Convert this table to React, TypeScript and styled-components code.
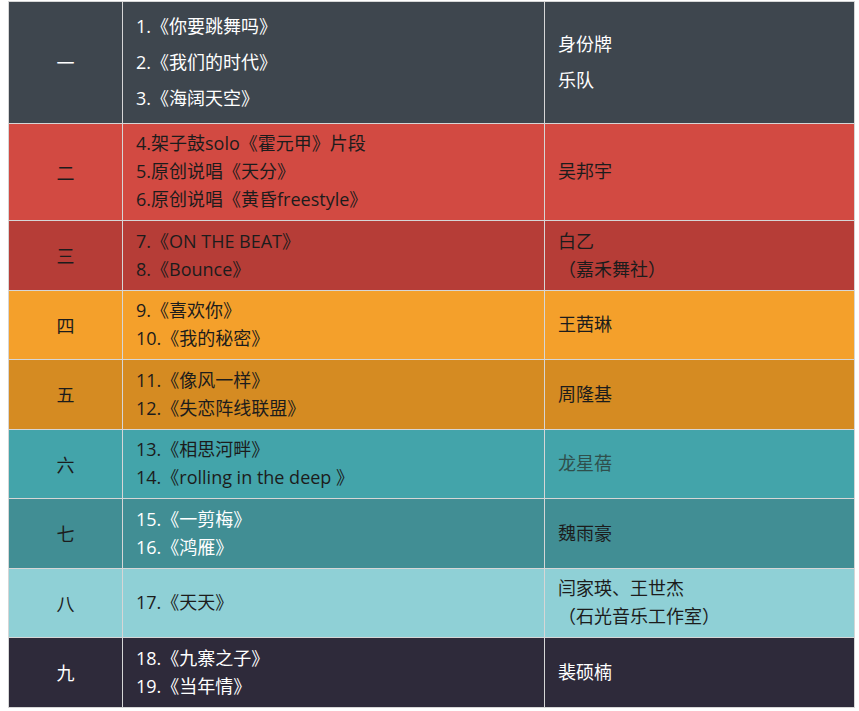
import React from "react";
import styled, { createGlobalStyle } from "styled-components";

const GlobalStyle = createGlobalStyle`
  html, body {
    margin: 0;
    padding: 0;
    background: #ffffff;
  }
  body {
    font-family: "Open Sans", "Noto Sans CJK SC", sans-serif;
  }
`;

const Page = styled.div`
  padding: 1px 0 0 8px;
`;

const Table = styled.table`
  width: 847px;
  border-collapse: collapse;
  table-layout: fixed;
  font-size: 18px;
`;

const Row = styled.tr<{ $bg: string }>`
  background: ${({ $bg }) => $bg};
`;

const Cell = styled.td<{ $color: string }>`
  border: 1px solid #d6d6d6;
  color: ${({ $color }) => $color};
  padding: 6.5px 13px 6px;
  vertical-align: middle;
`;

const IndexCell = styled(Cell)`
  text-align: center;
  padding: 0;
`;

const Line = styled.div<{ $tall?: boolean }>`
  height: ${({ $tall }) => ($tall ? "36px" : "28px")};
  line-height: ${({ $tall }) => ($tall ? "34px" : "26px")};
  white-space: nowrap;
  overflow: visible;
`;

type Item = {
  idx: string;
  bg: string;
  colors: [string, string, string];
  songs: string[];
  performers: string[];
  tall?: boolean;
};

const DARK = "#1c1c1c";
const LIGHT = "#ffffff";

const items: Item[] = [
  {
    idx: "一",
    bg: "#3e464e",
    colors: [LIGHT, LIGHT, LIGHT],
    songs: ["1.《你要跳舞吗》", "2.《我们的时代》", "3.《海阔天空》"],
    performers: ["身份牌", "乐队"],
    tall: true,
  },
  {
    idx: "二",
    bg: "#d24a42",
    colors: [DARK, DARK, DARK],
    songs: ["4.架子鼓solo《霍元甲》片段", "5.原创说唱《天分》", "6.原创说唱《黄昏freestyle》"],
    performers: ["吴邦宇"],
  },
  {
    idx: "三",
    bg: "#b63d37",
    colors: [DARK, DARK, DARK],
    songs: ["7.《ON THE BEAT》", "8.《Bounce》"],
    performers: ["白乙", "（嘉禾舞社）"],
  },
  {
    idx: "四",
    bg: "#f4a02b",
    colors: [DARK, DARK, DARK],
    songs: ["9.《喜欢你》", "10.《我的秘密》"],
    performers: ["王茜琳"],
  },
  {
    idx: "五",
    bg: "#d58b22",
    colors: [DARK, DARK, DARK],
    songs: ["11.《像风一样》", "12.《失恋阵线联盟》"],
    performers: ["周隆基"],
  },
  {
    idx: "六",
    bg: "#43a4aa",
    colors: [DARK, DARK, "#2f4f4c"],
    songs: ["13.《相思河畔》", "14.《rolling in the deep 》"],
    performers: ["龙星蓓"],
  },
  {
    idx: "七",
    bg: "#418e94",
    colors: [DARK, LIGHT, DARK],
    songs: ["15.《一剪梅》", "16.《鸿雁》"],
    performers: ["魏雨豪"],
  },
  {
    idx: "八",
    bg: "#8fd0d6",
    colors: [DARK, DARK, DARK],
    songs: ["17.《天天》"],
    performers: ["闫家瑛、王世杰", "（石光音乐工作室）"],
  },
  {
    idx: "九",
    bg: "#2e2a3a",
    colors: [LIGHT, LIGHT, LIGHT],
    songs: ["18.《九寨之子》", "19.《当年情》"],
    performers: ["裴硕楠"],
  },
];

export default function App() {
  return (
    <>
      <GlobalStyle />
      <Page>
        <Table>
          <colgroup>
            <col style={{ width: 114 }} />
            <col style={{ width: 422 }} />
            <col />
          </colgroup>
          <tbody>
            {items.map((it) => (
              <Row key={it.idx} $bg={it.bg}>
                <IndexCell $color={it.colors[0]}>{it.idx}</IndexCell>
                <Cell $color={it.colors[1]}>
                  {it.songs.map((s) => (
                    <Line key={s} $tall={it.tall}>{s}</Line>
                  ))}
                </Cell>
                <Cell $color={it.colors[2]}>
                  {it.performers.map((p) => (
                    <Line key={p} $tall={it.tall}>{p}</Line>
                  ))}
                </Cell>
              </Row>
            ))}
          </tbody>
        </Table>
      </Page>
    </>
  );
}
